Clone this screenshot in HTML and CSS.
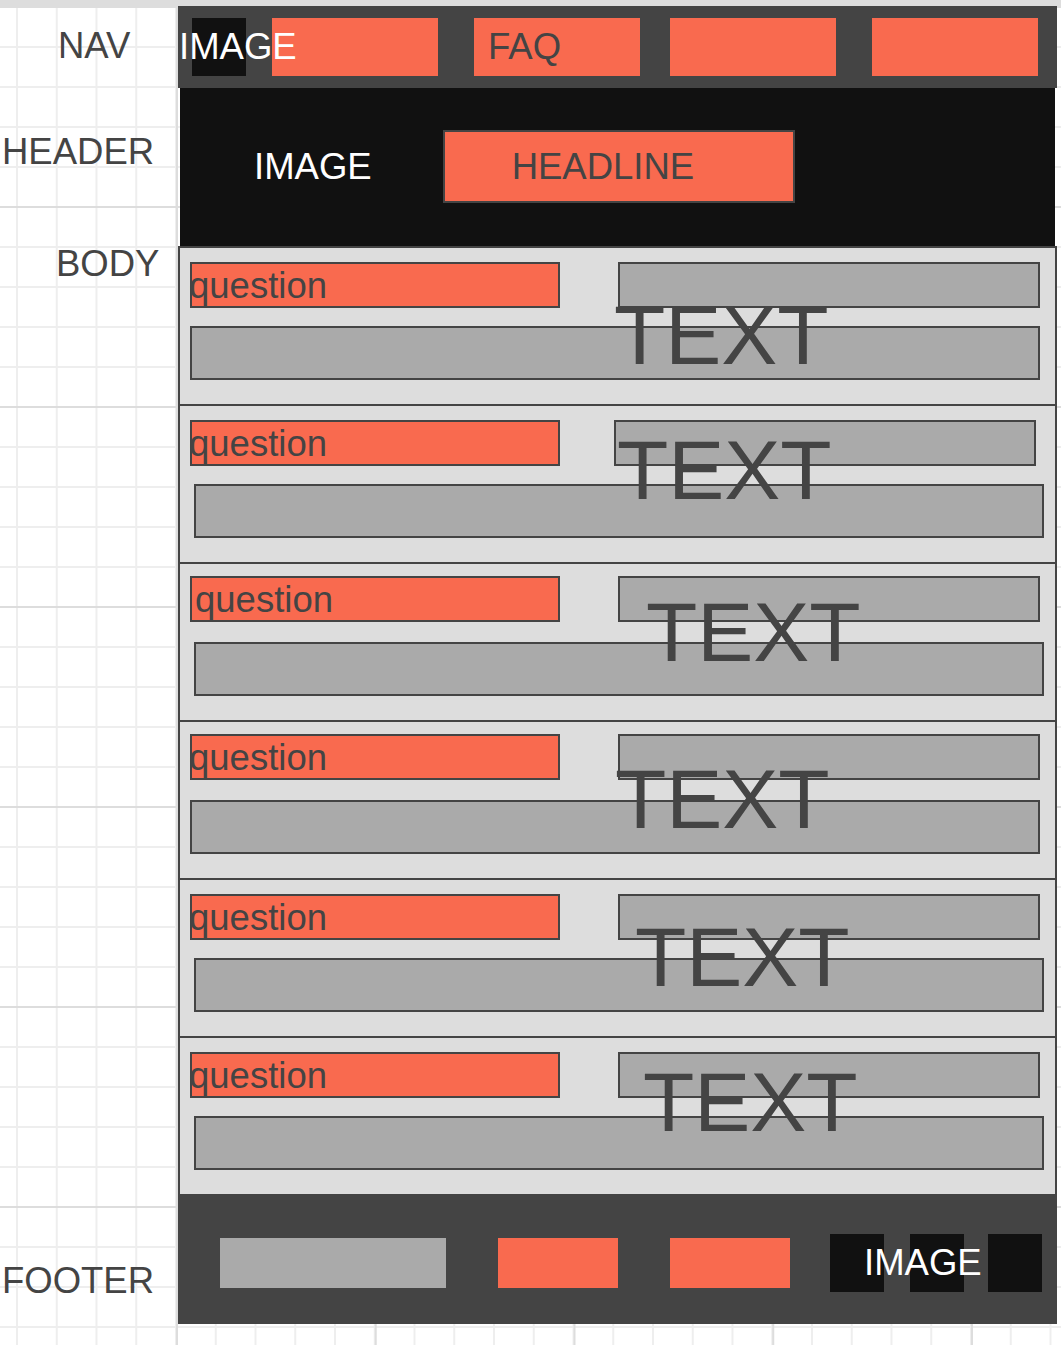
FILE: index.html
```html
<!DOCTYPE html>
<html lang="en">
<head>
<meta charset="utf-8">
<title>FAQ wireframe</title>
<link rel="stylesheet" href="styles.css">
</head>
<body>
<div class="sheet">
  <div class="topbar"></div>
  <div class="page">
    <div class="label label--nav">NAV</div>
    <nav class="nav">
      <div class="nav-img"><span class="img-text img-text--nav">IMAGE</span></div>
      <div class="nav-btn nav-btn--1"></div>
      <div class="nav-btn nav-btn--2"><span class="faq-link">FAQ</span></div>
      <div class="nav-btn nav-btn--3"></div>
      <div class="nav-btn nav-btn--4"></div>
    </nav>

    <div class="label label--header">HEADER</div>
    <header class="hero">
      <span class="hero-img">IMAGE</span>
      <div class="headline">HEADLINE</div>
    </header>

    <div class="label label--body">BODY</div>
    <main class="faq-list">
      <section class="row">
        <div class="row-top">
          <div class="q"><span class="q-text">question</span></div>
          <div class="a-short"></div>
        </div>
        <div class="a-long"></div>
        <span class="big-text big-text--1">TEXT</span>
      </section>
      <section class="row">
        <div class="row-top">
          <div class="q"><span class="q-text">question</span></div>
          <div class="a-short a-short--left"></div>
        </div>
        <div class="a-long a-long--shift"></div>
        <span class="big-text big-text--2">TEXT</span>
      </section>
      <section class="row row--tight">
        <div class="row-top">
          <div class="q"><span class="q-text q-text--inset">question</span></div>
          <div class="a-short"></div>
        </div>
        <div class="a-long a-long--shift"></div>
        <span class="big-text big-text--3">TEXT</span>
      </section>
      <section class="row row--tight">
        <div class="row-top">
          <div class="q"><span class="q-text">question</span></div>
          <div class="a-short"></div>
        </div>
        <div class="a-long"></div>
        <span class="big-text big-text--4">TEXT</span>
      </section>
      <section class="row">
        <div class="row-top">
          <div class="q"><span class="q-text">question</span></div>
          <div class="a-short"></div>
        </div>
        <div class="a-long a-long--shift"></div>
        <span class="big-text big-text--5">TEXT</span>
      </section>
      <section class="row">
        <div class="row-top">
          <div class="q"><span class="q-text">question</span></div>
          <div class="a-short"></div>
        </div>
        <div class="a-long a-long--shift"></div>
        <span class="big-text big-text--6">TEXT</span>
      </section>
    </main>

    <div class="label label--footer">FOOTER</div>
    <footer class="footer">
      <div class="foot-gray"></div>
      <div class="foot-btn foot-btn--1"></div>
      <div class="foot-btn foot-btn--2"></div>
      <div class="foot-img foot-img--1"></div>
      <div class="foot-img foot-img--2"><span class="img-text img-text--foot">IMAGE</span></div>
      <div class="foot-img foot-img--3"></div>
    </footer>
  </div>
</div>
</body>
</html>
```

FILE: styles.css
```css
* { box-sizing: border-box; }

html, body {
  margin: 0;
  padding: 0;
}

body {
  font-family: "Liberation Sans", Arial, sans-serif;
  font-size: 36.5px;
  color: #444444;
}

.sheet {
  min-height: 100vh;
  background-color: #ffffff;
  background-image:
    linear-gradient(to right, #dddddd 0 2px, transparent 2px),
    linear-gradient(to bottom, #dddddd 0 2px, transparent 2px),
    linear-gradient(to right, #eeeeee 0 2px, transparent 2px),
    linear-gradient(to bottom, #eeeeee 0 2px, transparent 2px);
  background-size: 198.75px 100%, 100% 200px, 39.75px 100%, 100% 40px;
  background-position: 176px 0, 0 6px, 16px 0, 0 6px;
}

.topbar {
  height: 6px;
  background: #dddddd;
}

.page {
  display: grid;
  grid-template-columns: 178px 879px;
}

/* left labels */
.label {
  line-height: 36px;
  white-space: nowrap;
  color: #444444;
}
.label--nav { padding: 22px 0 0 58px; }
.label--header { padding: 46px 0 0 2px; }
.label--body { padding: 0 0 0 56px; }
.label--footer { padding: 69px 0 0 2px; }

/* nav */
.nav {
  height: 82px;
  background: #444444;
  display: flex;
  align-items: flex-start;
  padding: 12px 19px 0 14px;
}
.nav-img {
  width: 54px;
  height: 58px;
  background: #111111;
  position: relative;
  z-index: 1;
}
.img-text {
  display: block;
  white-space: nowrap;
  color: #ffffff;
  line-height: 58px;
}
.img-text--nav { margin-left: -13px; }
.nav-btn {
  width: 166px;
  height: 58px;
  background: #f96a4f;
}
.nav-btn--1 { margin-left: 26px; }
.nav-btn--2 { margin-left: 36px; }
.nav-btn--3 { margin-left: 30px; }
.nav-btn--4 { margin-left: 36px; }
.faq-link {
  display: block;
  padding-left: 14px;
  line-height: 58px;
  color: #444444;
}

/* header */
.hero {
  height: 158px;
  margin: 0 2px;
  background: #111111;
  display: flex;
  align-items: flex-start;
  padding-top: 42px;
}
.hero-img {
  margin-left: 74px;
  padding-top: 2px;
  line-height: 69px;
  color: #ffffff;
  white-space: nowrap;
}
.headline {
  flex: none;
  margin-left: 71px;
  width: 352px;
  height: 73px;
  border: 2px solid #444444;
  background: #f96a4f;
  padding-left: 67px;
  line-height: 69px;
  color: #444444;
}

/* body list */
.faq-list {
  background: #dddddd;
  border-left: 2px solid #444444;
  border-right: 2px solid #444444;
}
.row {
  position: relative;
  height: 158px;
  border-top: 2px solid #444444;
  padding: 14px 0 0 10px;
}
.row--tight { padding-top: 12px; }
.row-top {
  display: flex;
}
.q {
  width: 370px;
  height: 46px;
  border: 2px solid #444444;
  background: #f96a4f;
}
.q-text {
  display: block;
  margin-left: -3px;
  line-height: 44px;
  color: #444444;
  white-space: nowrap;
}
.q-text--inset { margin-left: 3px; }
.a-short {
  width: 422px;
  height: 46px;
  margin-left: 58px;
  border: 2px solid #444444;
  background: #aaaaaa;
}
.a-short--left { margin-left: 54px; }
.a-long {
  width: 850px;
  height: 54px;
  margin-top: 18px;
  border: 2px solid #444444;
  background: #aaaaaa;
}
.row--tight .a-long { margin-top: 20px; }
.a-long--shift { margin-left: 4px; }

.big-text {
  position: absolute;
  font-size: 84px;
  line-height: 84px;
  color: #444444;
  white-space: nowrap;
}
.big-text--1 { left: 434px; top: 45px; }
.big-text--2 { left: 437px; top: 22px; }
.big-text--3 { left: 466px; top: 26px; }
.big-text--4 { left: 435px; top: 35px; }
.big-text--5 { left: 455px; top: 35px; }
.big-text--6 { left: 463px; top: 22px; }

/* footer */
.footer {
  height: 130px;
  background: #444444;
  display: flex;
  align-items: center;
  padding: 8px 0 0 42px;
}
.foot-gray {
  width: 226px;
  height: 50px;
  background: #aaaaaa;
}
.foot-btn {
  width: 120px;
  height: 50px;
  background: #f96a4f;
  margin-left: 52px;
}
.foot-img {
  width: 54px;
  height: 58px;
  background: #111111;
}
.foot-img--1 { margin-left: 40px; }
.foot-img--2 { margin-left: 26px; }
.foot-img--3 { margin-left: 24px; }
.img-text--foot { margin-left: -46px; }
```
